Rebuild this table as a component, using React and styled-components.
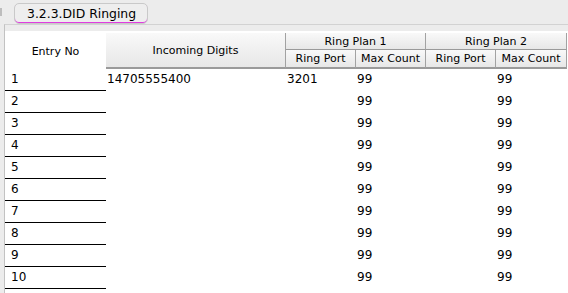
import React from "react"
import styled, { createGlobalStyle } from "styled-components"

const GlobalStyle = createGlobalStyle`
  html, body {
    margin: 0;
    padding: 0;
    background: #ececec;
  }
  body {
    font-family: "DejaVu Sans", "Liberation Sans", sans-serif;
    color: #000;
  }
`

const Page = styled.div`
  width: 568px;
  height: 293px;
  overflow: hidden;
  display: flex;
  flex-direction: column;
  background: #ececec;
`

const TabBar = styled.div`
  height: 24px;
  display: flex;
  align-items: flex-start;
  flex-shrink: 0;
`

const TabStub = styled.span`
  width: 2px;
  height: 8px;
  margin-top: 8px;
  background: #bdbdbd;
`

const Tab = styled.div`
  margin: 3px 0 0 12px;
  height: 19px;
  padding: 0 11px 0 12px;
  border: 1px solid #c9c9c9;
  border-radius: 5px;
  background: #eeeeee;
  box-shadow: inset 0 -1px 0 #e03ce0;
  font-size: 12.4px;
  line-height: 19px;
  white-space: nowrap;
`

const Panel = styled.div`
  flex: 1;
  margin-left: 4px;
  border-left: 1px solid #c2c2c2;
  border-top: 1px solid #d2d2d2;
  padding-top: 6px;
  display: flex;
  flex-direction: column;
`

const Sheet = styled.div`
  flex: 1;
  background: #fff;
  padding-top: 2px;
`

const Grid = styled.div`
  display: grid;
  grid-template-columns: 101px 180px 70px 70px 70px 71px;
  grid-template-rows: 17px 19px;
  grid-auto-rows: 22px;
  font-size: 12px;
`

const HeadCell = styled.div`
  grid-column: ${(p) => p.$col};
  grid-row: ${(p) => p.$row};
  display: flex;
  align-items: center;
  justify-content: center;
  font-size: 11px;
  white-space: nowrap;
  overflow: hidden;
  ${(p) =>
    p.$plain
      ? "background: #fff;"
      : `
    background: linear-gradient(#f9f9f9, #e7e7e7);
    border-right: 1px solid #a2a2a2;
    border-bottom: ${p.$bottom || 1}px solid #9a9a9a;
  `}
`

const Cell = styled.div`
  line-height: 21px;
  padding-left: ${(p) => (p.$entry ? 6 : 1)}px;
  border-bottom: 1px solid ${(p) => (p.$entry ? "#000" : "transparent")};
  white-space: nowrap;
`

const rows = Array.from({ length: 10 }, (_, i) => ({
  entry: i + 1,
  digits: i === 0 ? "14705555400" : "",
  port1: i === 0 ? "3201" : "",
  max1: "99",
  port2: "",
  max2: "99",
}))

export default function App() {
  return (
    <Page>
      <GlobalStyle />
      <TabBar>
        <TabStub />
        <Tab>3.2.3.DID Ringing</Tab>
      </TabBar>
      <Panel>
        <Sheet>
          <Grid>
            <HeadCell $col="1" $row="1 / 3" $plain>
              Entry No
            </HeadCell>
            <HeadCell $col="2" $row="1 / 3" $bottom={2}>
              Incoming Digits
            </HeadCell>
            <HeadCell $col="3 / 5" $row="1">
              Ring Plan 1
            </HeadCell>
            <HeadCell $col="5 / 7" $row="1">
              Ring Plan 2
            </HeadCell>
            <HeadCell $col="3" $row="2" $bottom={2}>
              Ring Port
            </HeadCell>
            <HeadCell $col="4" $row="2" $bottom={2}>
              Max Count
            </HeadCell>
            <HeadCell $col="5" $row="2" $bottom={2}>
              Ring Port
            </HeadCell>
            <HeadCell $col="6" $row="2" $bottom={2}>
              Max Count
            </HeadCell>
            {rows.map((r) => (
              <React.Fragment key={r.entry}>
                <Cell $entry>{r.entry}</Cell>
                <Cell>{r.digits}</Cell>
                <Cell>{r.port1}</Cell>
                <Cell>{r.max1}</Cell>
                <Cell>{r.port2}</Cell>
                <Cell>{r.max2}</Cell>
              </React.Fragment>
            ))}
          </Grid>
        </Sheet>
      </Panel>
    </Page>
  )
}
